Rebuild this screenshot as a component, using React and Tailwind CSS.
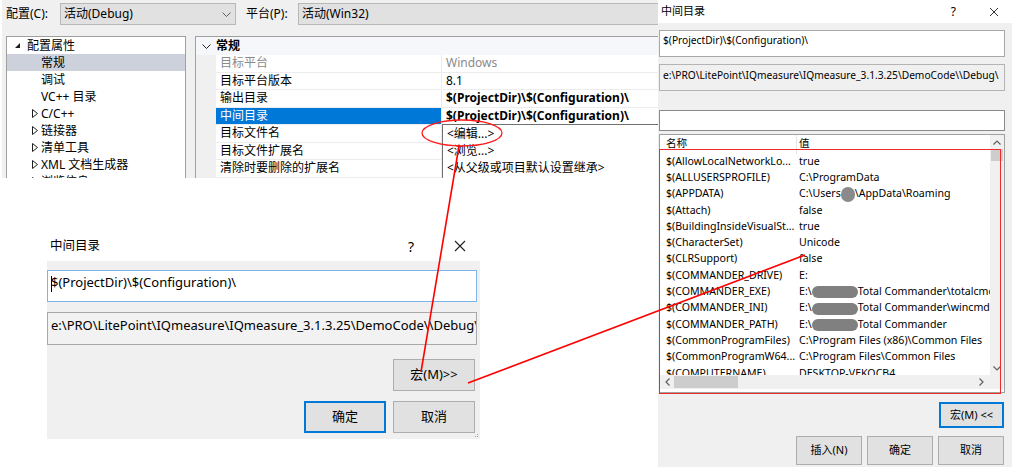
import React from 'react';

const TREE = [
  { label: '配置属性', level: 0, icon: 'open' },
  { label: '常规', level: 1, selected: true },
  { label: '调试', level: 1 },
  { label: 'VC++ 目录', level: 1 },
  { label: 'C/C++', level: 1, icon: 'closed' },
  { label: '链接器', level: 1, icon: 'closed' },
  { label: '清单工具', level: 1, icon: 'closed' },
  { label: 'XML 文档生成器', level: 1, icon: 'closed' },
  { label: '浏览信息', level: 1, icon: 'closed' },
];

const PROPS = [
  { name: '目标平台', value: 'Windows', dim: true },
  { name: '目标平台版本', value: '8.1' },
  { name: '输出目录', value: '$(ProjectDir)\\$(Configuration)\\', bold: true },
  { name: '中间目录', value: '$(ProjectDir)\\$(Configuration)\\', bold: true, selected: true },
  { name: '目标文件名', value: '' },
  { name: '目标文件扩展名', value: '' },
  { name: '清除时要删除的扩展名', value: '' },
];

const MACROS = [
  ['$(AllowLocalNetworkLo...', 'true'],
  ['$(ALLUSERSPROFILE)', 'C:\\ProgramData'],
  ['$(APPDATA)', 'appdata'],
  ['$(Attach)', 'false'],
  ['$(BuildingInsideVisualSt...', 'true'],
  ['$(CharacterSet)', 'Unicode'],
  ['$(CLRSupport)', 'false'],
  ['$(COMMANDER_DRIVE)', 'E:'],
  ['$(COMMANDER_EXE)', 'tc:\\totalcmd64.exe'],
  ['$(COMMANDER_INI)', 'tc:\\wincmd.ini'],
  ['$(COMMANDER_PATH)', 'tc:'],
  ['$(CommonProgramFiles)', 'C:\\Program Files (x86)\\Common Files'],
  ['$(CommonProgramW64...', 'C:\\Program Files\\Common Files'],
  ['$(COMPUTERNAME)', 'DESKTOP-VEKOCB4'],
];

function ChevronDown({ className = '' }) {
  return (
    <svg width="9" height="5" viewBox="0 0 9 5" className={className}>
      <path d="M0.5 0.5 L4.5 4.5 L8.5 0.5" fill="none" stroke="currentColor" strokeWidth="1" />
    </svg>
  );
}

function TreeIcon({ kind }) {
  if (kind === 'open') {
    return (
      <svg width="7" height="7" viewBox="0 0 7 7">
        <path d="M6 1 L6 6 L1 6 Z" fill="#1e1e1e" />
      </svg>
    );
  }
  return (
    <svg width="6" height="9" viewBox="0 0 6 9">
      <path d="M0.5 0.5 L5.5 4.5 L0.5 8.5 Z" fill="none" stroke="#1e1e1e" strokeWidth="1" />
    </svg>
  );
}

function Blob({ w }) {
  return <span className={`inline-block align-middle h-[12px] rounded-full bg-[#808080] ${w}`} />;
}

function MacroValue({ v }) {
  if (v === 'appdata') {
    return (
      <span>C:\Users<span className="inline-block align-middle w-[14px] h-[15px] rounded-full bg-[#8a8a8a]" />\AppData\Roaming</span>
    );
  }
  if (v.startsWith('tc:')) {
    return (
      <span className="whitespace-nowrap">E:\<Blob w="w-[46px]" />Total Commander{v.slice(3)}</span>
    );
  }
  return <span className="whitespace-nowrap">{v}</span>;
}

function VsProperties() {
  return (
    <div className="absolute left-[2px] top-0 w-[660px] h-[178px] bg-[#f0f0f0] overflow-hidden text-[12px] text-black">
      <div className="flex items-center h-[28px]">
        <span className="ml-[4px] w-[54px]">配置(C):</span>
        <div className="w-[176px] h-[22px] bg-[#e1e1e1] border border-[#b8b8b8] flex items-center justify-between pl-[3px] pr-[4px]">
          <span>活动(Debug)</span>
          <ChevronDown className="text-[#606060]" />
        </div>
        <span className="ml-[10px] w-[52px]">平台(P):</span>
        <div className="flex-1 h-[22px] bg-[#e1e1e1] border border-[#b8b8b8] flex items-center pl-[3px]">
          活动(Win32)
        </div>
      </div>
      <div className="flex mt-[8px] ml-[4px] gap-[9px]">
        <div className="w-[180px] h-[160px] bg-white border border-[#a0a0a0]">
          {TREE.map((t) => (
            <div
              key={t.label}
              className={`relative h-[17px] flex items-center ${t.selected ? 'bg-[#ccd1db]' : ''} ${t.level === 0 ? 'pl-[20px]' : 'pl-[34px]'}`}
            >
              {t.icon && (
                <span className={`absolute flex items-center ${t.level === 0 ? 'left-[7px]' : 'left-[25px]'}`}>
                  <TreeIcon kind={t.icon} />
                </span>
              )}
              <span>{t.label}</span>
            </div>
          ))}
        </div>
        <div className="relative flex-1 h-[160px] bg-white border-l border-t border-[#a0a0a0]">
          <div className="h-[18px] flex items-center bg-[#f5f7fb]">
            <span className="w-[20px] flex justify-center text-[#1e1e1e]">
              <ChevronDown />
            </span>
            <span className="font-bold">常规</span>
          </div>
          {PROPS.map((p) => (
            <div key={p.name} className="flex h-[17.5px]">
              <div className="w-[20px] bg-[#f0f0f0]" />
              <div
                className={`w-[226px] flex items-center pl-[4px] border-b border-r border-[#ececec] ${p.selected ? 'bg-[#0078d7] text-white' : ''} ${p.dim ? 'text-[#8a8a8a]' : ''}`}
              >
                {p.name}
              </div>
              <div
                className={`flex-1 flex items-center pl-[4px] border-b border-[#ececec] ${p.bold ? 'font-bold' : ''} ${p.dim ? 'text-[#8a8a8a]' : ''}`}
              >
                {p.value}
              </div>
            </div>
          ))}
          <div className="absolute left-[246px] top-[87px] w-[230px] h-[80px] bg-white border-l border-t border-[#707070]">
            {['<编辑...>', '<浏览...>', '<从父级或项目默认设置继承>'].map((s) => (
              <div key={s} className="h-[17px] flex items-center pl-[4px]">
                {s}
              </div>
            ))}
          </div>
        </div>
      </div>
    </div>
  );
}

function Button({ children, primary, className = '' }) {
  return (
    <div
      className={`flex items-center justify-center bg-[#e1e1e1] ${primary ? 'border-2 border-[#0078d7]' : 'border border-[#adadad]'} ${className}`}
    >
      {children}
    </div>
  );
}

function SmallDialog() {
  return (
    <div className="absolute left-[47px] top-[228px] w-[433px] h-[211px] text-[13px] text-black">
      <div className="h-[33px] bg-white flex items-center pl-[3px] pr-[14px] pt-[3px]">
        <span className="text-[12.5px]">中间目录</span>
        <span className="ml-auto mr-[40px] text-[14px]">?</span>
        <svg width="12" height="12" viewBox="0 0 12 12">
          <path d="M1 1 L11 11 M11 1 L1 11" stroke="#202020" strokeWidth="1.1" />
        </svg>
      </div>
      <div className="relative h-[178px] bg-[#f0f0f0] flex flex-col pt-[9px] pr-[3px]">
        <div className="h-[32px] bg-white border border-[#7eb4ea] flex items-start pt-[2px] pl-[3px] whitespace-nowrap">
          <span className="w-[1px] h-[16px] mt-[3px] bg-black -mr-[1px]" />
          $(ProjectDir)\$(Configuration)\
        </div>
        <div className="mt-[10px] h-[33px] bg-[#f2f2f2] border border-[#a8a8a8] flex items-start pt-[3px] pl-[3px] whitespace-nowrap overflow-hidden">
          e:\PRO\LitePoint\IQmeasure\IQmeasure_3.1.3.25\DemoCode\\Debug\
        </div>
        <div className="flex justify-end mt-[14px] pr-[2px]">
          <Button className="w-[82px] h-[32px]">宏(M)&gt;&gt;</Button>
        </div>
        <div className="flex justify-end gap-[7px] mt-[10px] pr-[2px]">
          <Button primary className="w-[82px] h-[32px]">确定</Button>
          <Button className="w-[82px] h-[32px]">取消</Button>
        </div>
        <svg className="absolute right-[1px] bottom-[1px]" width="5" height="5" viewBox="0 0 5 5">
          <rect x="3" y="3" width="1" height="1" fill="#a0a0a0" />
          <rect x="1" y="3" width="1" height="1" fill="#a0a0a0" />
          <rect x="3" y="1" width="1" height="1" fill="#a0a0a0" />
        </svg>
      </div>
    </div>
  );
}

function MacroDialog() {
  return (
    <div className="absolute left-[658px] top-0 w-[354px] h-[467px] text-[11px] text-black">
      <div className="h-[23px] bg-white flex items-center pl-[3px] pr-[13px]">
        <span>中间目录</span>
        <span className="ml-auto mr-[33px] text-[12px]">?</span>
        <svg width="10" height="10" viewBox="0 0 10 10">
          <path d="M1 1 L9 9 M9 1 L1 9" stroke="#303030" strokeWidth="1" />
        </svg>
      </div>
      <div className="h-[444px] bg-[#f0f0f0] flex flex-col pt-[7px] pl-[1px] pr-[7px]">
        <div className="h-[27px] bg-white border border-[#a8a8a8] flex items-start pt-[2px] pl-[3px] whitespace-nowrap text-[10.2px]">
          $(ProjectDir)\$(Configuration)\
        </div>
        <div className="mt-[7px] h-[27px] bg-[#f0f0f0] border border-[#b4b4b4] flex items-start pt-[3px] pl-[3px] whitespace-nowrap overflow-hidden text-[10.2px]">
          e:\PRO\LitePoint\IQmeasure\IQmeasure_3.1.3.25\DemoCode\\Debug\
        </div>
        <div className="mt-[19px] h-[21px] bg-white border border-[#8a8a8a]" />
        <div className="mt-[3px] h-[259px] bg-white border border-[#a0a0a0] flex flex-col overflow-hidden text-[10.6px]">
          <div className="flex h-[240px]">
            <div className="flex-1 overflow-hidden">
              <div className="flex h-[18.5px] items-center">
                <span className="w-[137px] pl-[6px] h-full flex items-center border-r border-[#e5e5e5]">名称</span>
                <span className="pl-[2px]">值</span>
              </div>
              {MACROS.map(([n, v]) => (
                <div key={n} className="flex h-[16.3px] items-center whitespace-nowrap">
                  <span className="w-[137px] shrink-0 pl-[6px]">{n}</span>
                  <span className="pl-[2px]">
                    <MacroValue v={v} />
                  </span>
                </div>
              ))}
            </div>
            <div className="w-[14px] bg-[#f0f0f0] flex flex-col items-center">
              <svg className="mt-[5px]" width="8" height="5" viewBox="0 0 8 5">
                <path d="M0.5 4.5 L4 1 L7.5 4.5" fill="none" stroke="#606060" strokeWidth="1.2" />
              </svg>
              <div className="mt-[4px] w-[12px] h-[12px] bg-[#cdcdcd]" />
              <svg className="mt-auto mb-[4px]" width="8" height="5" viewBox="0 0 8 5">
                <path d="M0.5 0.5 L4 4 L7.5 0.5" fill="none" stroke="#606060" strokeWidth="1.2" />
              </svg>
            </div>
          </div>
          <div className="flex h-[14px] items-center bg-[#f0f0f0]">
            <svg className="ml-[5px]" width="5" height="8" viewBox="0 0 5 8">
              <path d="M4.5 0.5 L1 4 L4.5 7.5" fill="none" stroke="#606060" strokeWidth="1.2" />
            </svg>
            <div className="ml-[4px] w-[64px] h-[12px] bg-[#cdcdcd]" />
            <svg className="ml-auto mr-[20px]" width="5" height="8" viewBox="0 0 5 8">
              <path d="M0.5 0.5 L4 4 L0.5 7.5" fill="none" stroke="#606060" strokeWidth="1.2" />
            </svg>
          </div>
        </div>
        <div className="flex justify-end mt-[9px] pr-[1px]">
          <Button primary className="w-[65px] h-[26px]">宏(M) &lt;&lt;</Button>
        </div>
        <div className="flex justify-end gap-[5px] mt-[8px] pr-[1px]">
          <Button className="w-[66px] h-[29px]">插入(N)</Button>
          <Button className="w-[66px] h-[29px]">确定</Button>
          <Button className="w-[66px] h-[29px]">取消</Button>
        </div>
      </div>
    </div>
  );
}

export default function App() {
  return (
    <div className="relative w-[1012px] h-[467px] bg-white overflow-hidden font-['Noto_Sans','Noto_Sans_CJK_SC',sans-serif]">
      <VsProperties />
      <SmallDialog />
      <MacroDialog />
      {/* annotation drawn on top of the screenshots */}
      <div className="absolute left-[659px] top-[149px] w-[342px] h-[245px] border-[1.5px] border-[#ee2a2a] pointer-events-none" />
      <svg className="absolute left-0 top-0 pointer-events-none" width="1012" height="467" viewBox="0 0 1012 467">
        <ellipse cx="462" cy="133" rx="40" ry="13" fill="none" stroke="#ff1a1a" strokeWidth="1.3" />
        <line x1="459" y1="146" x2="421" y2="372" stroke="#ff0000" strokeWidth="1.6" />
        <line x1="468" y1="383" x2="805" y2="255" stroke="#ff0000" strokeWidth="1.6" />
      </svg>
    </div>
  );
}
